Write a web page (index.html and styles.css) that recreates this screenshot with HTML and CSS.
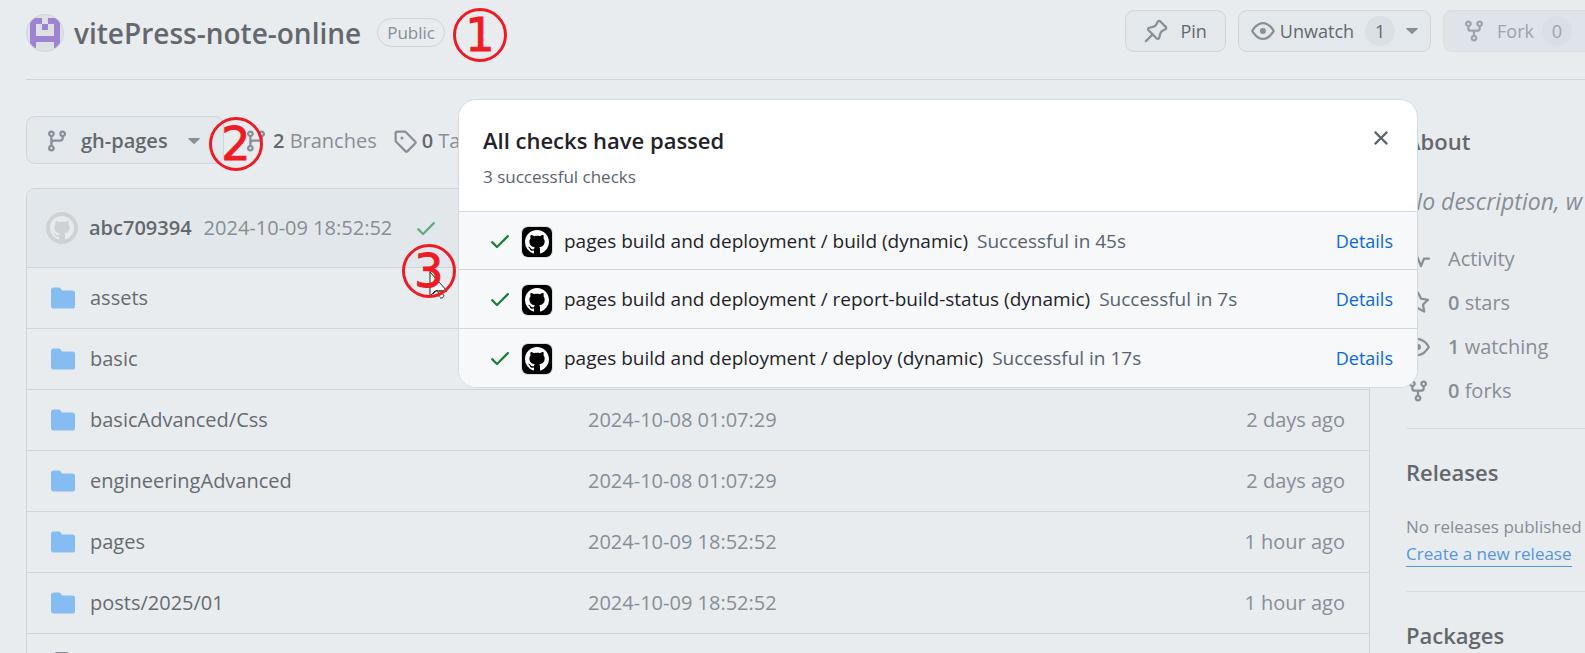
FILE: index.html
```html
<!DOCTYPE html>
<html lang="en">
<head>
<meta charset="utf-8">
<title>vitePress-note-online</title>
<meta name="viewport" content="width=device-width, initial-scale=1">
<link rel="stylesheet" href="styles.css">
</head>
<body>
<svg class="sprite" aria-hidden="true">
  <symbol id="branch" viewBox="0 0 16 16"><path d="M9.5 3.25a2.25 2.25 0 1 1 3 2.122V6A2.5 2.5 0 0 1 10 8.5H6a1 1 0 0 0-1 1v1.128a2.251 2.251 0 1 1-1.5 0V5.372a2.25 2.25 0 1 1 1.5 0v1.836A2.493 2.493 0 0 1 6 7h4a1 1 0 0 0 1-1v-.628A2.25 2.25 0 0 1 9.5 3.25Zm-6 0a.75.75 0 1 0 1.5 0 .75.75 0 0 0-1.5 0Zm8.25-.75a.75.75 0 1 0 0 1.5.75.75 0 0 0 0-1.5ZM4.25 12a.75.75 0 1 0 0 1.5.75.75 0 0 0 0-1.5Z"/></symbol>
  <symbol id="fork" viewBox="0 0 16 16"><path d="M5 5.372v.878c0 .414.336.75.75.75h4.5a.75.75 0 0 0 .75-.75v-.878a2.25 2.25 0 1 1 1.5 0v.878a2.25 2.25 0 0 1-2.25 2.25h-1.5v2.128a2.251 2.251 0 1 1-1.5 0V8.5h-1.5A2.25 2.25 0 0 1 3.5 6.25v-.878a2.25 2.25 0 1 1 1.5 0ZM5 3.25a.75.75 0 1 0-1.5 0 .75.75 0 0 0 1.5 0Zm6.75.75a.75.75 0 1 0 0-1.5.75.75 0 0 0 0 1.5Zm-3 8.75a.75.75 0 1 0-1.5 0 .75.75 0 0 0 1.5 0Z"/></symbol>
  <symbol id="eye" viewBox="0 0 16 16"><path d="M8 2c1.981 0 3.671.992 4.933 2.078 1.27 1.091 2.187 2.345 2.637 3.023a1.62 1.62 0 0 1 0 1.798c-.45.678-1.367 1.932-2.637 3.023C11.67 13.008 9.981 14 8 14c-1.981 0-3.671-.992-4.933-2.078C1.797 10.83.88 9.576.43 8.898a1.62 1.62 0 0 1 0-1.798c.45-.677 1.367-1.931 2.637-3.022C4.33 2.992 6.019 2 8 2ZM1.679 7.932a.12.12 0 0 0 0 .136c.411.622 1.241 1.75 2.366 2.717C5.176 11.758 6.527 12.5 8 12.5c1.473 0 2.825-.742 3.955-1.715 1.124-.967 1.954-2.096 2.366-2.717a.12.12 0 0 0 0-.136c-.412-.621-1.242-1.75-2.366-2.717C10.824 4.242 9.473 3.5 8 3.5c-1.473 0-2.825.742-3.955 1.715-1.124.967-1.954 2.096-2.366 2.717ZM8 10a2 2 0 1 1-.001-3.999A2 2 0 0 1 8 10Z"/></symbol>
  <symbol id="pin" viewBox="0 0 16 16"><path d="m11.294.984 3.722 3.722a1.75 1.75 0 0 1-.504 2.826l-1.327.613a3.089 3.089 0 0 0-1.707 2.084l-.584 2.454c-.317 1.332-1.972 1.8-2.94.832L5.75 11.311 1.78 15.28a.749.749 0 1 1-1.06-1.06l3.969-3.97-2.204-2.204c-.968-.968-.5-2.623.832-2.94l2.454-.584a3.08 3.08 0 0 0 2.084-1.707l.613-1.327a1.75 1.75 0 0 1 2.826-.504ZM6.283 9.723l2.732 2.731a.25.25 0 0 0 .42-.119l.584-2.454a4.586 4.586 0 0 1 2.537-3.098l1.328-.613a.25.25 0 0 0 .072-.404l-3.722-3.722a.25.25 0 0 0-.404.072l-.613 1.328a4.584 4.584 0 0 1-3.098 2.537l-2.454.584a.25.25 0 0 0-.119.42l2.731 2.732Z"/></symbol>
  <symbol id="tag" viewBox="0 0 16 16"><path d="M1 7.775V2.75C1 1.784 1.784 1 2.75 1h5.025c.464 0 .91.184 1.238.513l6.25 6.25a1.75 1.75 0 0 1 0 2.474l-5.026 5.026a1.75 1.75 0 0 1-2.474 0l-6.25-6.25A1.752 1.752 0 0 1 1 7.775Zm1.5 0c0 .066.026.13.073.177l6.25 6.25a.25.25 0 0 0 .354 0l5.025-5.025a.25.25 0 0 0 0-.354l-6.25-6.25a.25.25 0 0 0-.177-.073H2.75a.25.25 0 0 0-.25.25ZM6 5a1 1 0 1 1 0 2 1 1 0 0 1 0-2Z"/></symbol>
  <symbol id="check" viewBox="0 0 16 16"><path d="M13.78 4.22a.75.75 0 0 1 0 1.06l-7.25 7.25a.75.75 0 0 1-1.06 0L2.22 9.28a.751.751 0 0 1 1.06-1.06L6 10.94l6.72-6.72a.75.75 0 0 1 1.06 0Z"/></symbol>
  <symbol id="folder" viewBox="0 0 16 16"><path d="M1.75 1A1.75 1.75 0 0 0 0 2.75v10.5C0 14.216.784 15 1.75 15h12.5A1.75 1.75 0 0 0 16 13.25v-8.5A1.75 1.75 0 0 0 14.25 3H7.5a.25.25 0 0 1-.2-.1l-.9-1.2C6.07 1.26 5.55 1 5 1H1.75Z"/></symbol>
  <symbol id="file" viewBox="0 0 16 16"><path d="M2 1.75C2 .784 2.784 0 3.75 0h6.586c.464 0 .909.184 1.237.513l2.914 2.914c.329.328.513.773.513 1.237v9.586A1.75 1.75 0 0 1 13.25 16h-9.5A1.75 1.75 0 0 1 2 14.25Zm1.75-.25a.25.25 0 0 0-.25.25v12.5c0 .138.112.25.25.25h9.5a.25.25 0 0 0 .25-.25V6h-2.75A1.75 1.75 0 0 1 9 4.25V1.5Z"/></symbol>
  <symbol id="pulse" viewBox="0 0 16 16"><path d="M6 2c.306 0 .582.187.696.471L10 10.731l1.304-3.26A.751.751 0 0 1 12 7h3.25a.75.75 0 0 1 0 1.5h-2.742l-1.812 4.528a.751.751 0 0 1-1.392 0L6 4.77 4.696 8.03A.75.75 0 0 1 4 8.5H.75a.75.75 0 0 1 0-1.5h2.742l1.812-4.529A.751.751 0 0 1 6 2Z"/></symbol>
  <symbol id="star" viewBox="0 0 16 16"><path d="M8 .25a.75.75 0 0 1 .673.418l1.882 3.815 4.21.612a.75.75 0 0 1 .416 1.279l-3.046 2.97.719 4.192a.751.751 0 0 1-1.088.791L8 12.347l-3.766 1.98a.75.75 0 0 1-1.088-.79l.72-4.194L.818 6.374a.75.75 0 0 1 .416-1.28l4.21-.611L7.327.668A.75.75 0 0 1 8 .25Zm0 2.445L6.615 5.5a.75.75 0 0 1-.564.41l-3.097.45 2.24 2.184a.75.75 0 0 1 .216.664l-.528 3.084 2.769-1.456a.75.75 0 0 1 .698 0l2.77 1.456-.53-3.084a.75.75 0 0 1 .216-.664l2.24-2.183-3.096-.45a.75.75 0 0 1-.564-.41L8 2.694Z"/></symbol>
  <symbol id="close" viewBox="0 0 16 16"><path d="M3.72 3.72a.75.75 0 0 1 1.06 0L8 6.94l3.22-3.22a.751.751 0 0 1 1.06 1.06L9.06 8l3.22 3.22a.751.751 0 0 1-1.06 1.06L8 9.06l-3.22 3.22a.751.751 0 0 1-1.06-1.06L6.94 8 3.72 4.78a.75.75 0 0 1 0-1.06Z"/></symbol>
  <symbol id="mark" viewBox="0 0 16 16"><path d="M8 0c4.42 0 8 3.58 8 8a8.013 8.013 0 0 1-5.45 7.59c-.4.08-.55-.17-.55-.38 0-.27.01-1.13.01-2.2 0-.75-.25-1.23-.54-1.48 1.78-.2 3.65-.88 3.65-3.95 0-.88-.31-1.59-.82-2.15.08-.2.36-1.02-.08-2.12 0 0-.67-.22-2.2.82-.64-.18-1.32-.27-2-.27-.68 0-1.36.09-2 .27-1.53-1.03-2.2-.82-2.2-.82-.44 1.1-.16 1.92-.08 2.12-.51.56-.82 1.28-.82 2.15 0 3.06 1.86 3.75 3.64 3.95-.23.2-.44.55-.51 1.07-.46.21-1.61.55-2.33-.66-.15-.24-.6-.83-1.23-.82-.67.01-.27.38.01.53.34.19.73.9.82 1.13.16.45.68 1.31 2.69.94 0 .67.01 1.3.01 1.49 0 .21-.15.45-.55.38A7.995 7.995 0 0 1 0 8c0-4.42 3.58-8 8-8Z"/></symbol>
  <symbol id="caret" viewBox="0 0 12 6"><path d="M.9 0h10.2c.7 0 .9.6.5 1L6.5 5.7a.7.7 0 0 1-1 0L.4 1C0 .6.2 0 .9 0Z"/></symbol>
</svg>

<header class="repo-head">
  <svg class="identicon" viewBox="0 0 38 38" aria-hidden="true">
    <defs><clipPath id="round"><circle cx="19" cy="19" r="18"/></clipPath></defs>
    <circle cx="19" cy="19" r="18.5" fill="#dde1e4" stroke="#d0d5d9"/>
    <path clip-path="url(#round)" fill="#9c84d3" d="M4 4h12v6h-6v12h18V10h-6V4h12v30h-6v-6H10v6H4ZM16 10h6v6h-6Z"/>
  </svg>
  <h1 class="repo-name">vitePress-note-online</h1>
  <span class="visibility">Public</span>
  <div class="actions">
    <button class="btn btn-pin" type="button"><svg class="icon"><use href="#pin"/></svg>Pin</button>
    <button class="btn btn-watch" type="button"><svg class="icon"><use href="#eye"/></svg>Unwatch<span class="count">1</span><svg class="caret"><use href="#caret"/></svg></button>
    <button class="btn btn-fork" type="button" disabled><svg class="icon"><use href="#fork"/></svg>Fork<span class="count">0</span></button>
  </div>
</header>

<div class="layout">
  <main class="code">
    <div class="toolbar">
      <button class="btn btn-branch" type="button"><svg class="icon"><use href="#branch"/></svg>gh-pages<svg class="caret"><use href="#caret"/></svg></button>
      <a class="stat" href="#branches"><svg class="icon"><use href="#branch"/></svg><span><b>2</b> Branches</span></a>
      <a class="stat" href="#tags"><svg class="icon"><use href="#tag"/></svg><span><b>0</b> Tags</span></a>
    </div>
    <div class="files">
      <div class="commit">
        <span class="avatar"><svg><use href="#mark"/></svg></span>
        <b class="author">abc709394</b>
        <time>2024-10-09 18:52:52</time>
        <svg class="icon passed"><use href="#check"/></svg>
      </div>
      <table class="file-table">
        <tbody>
          <tr><td class="name"><span class="entry"><svg class="icon folder"><use href="#folder"/></svg>assets</span></td><td></td><td></td></tr>
          <tr><td class="name"><span class="entry"><svg class="icon folder"><use href="#folder"/></svg>basic</span></td><td></td><td></td></tr>
          <tr><td class="name"><span class="entry"><svg class="icon folder"><use href="#folder"/></svg>basicAdvanced/Css</span></td><td>2024-10-08 01:07:29</td><td class="age">2 days ago</td></tr>
          <tr><td class="name"><span class="entry"><svg class="icon folder"><use href="#folder"/></svg>engineeringAdvanced</span></td><td>2024-10-08 01:07:29</td><td class="age">2 days ago</td></tr>
          <tr><td class="name"><span class="entry"><svg class="icon folder"><use href="#folder"/></svg>pages</span></td><td>2024-10-09 18:52:52</td><td class="age">1 hour ago</td></tr>
          <tr><td class="name"><span class="entry"><svg class="icon folder"><use href="#folder"/></svg>posts/2025/01</span></td><td>2024-10-09 18:52:52</td><td class="age">1 hour ago</td></tr>
          <tr><td class="name"><span class="entry"><svg class="icon"><use href="#file"/></svg></span></td><td></td><td></td></tr>
        </tbody>
      </table>
    </div>
  </main>

  <aside class="sidebar">
    <section class="panel">
      <h2>About</h2>
      <p class="description">No description, w</p>
      <ul class="facts">
        <li><svg class="icon"><use href="#pulse"/></svg><span>Activity</span></li>
        <li><svg class="icon"><use href="#star"/></svg><span><b>0</b> stars</span></li>
        <li><svg class="icon"><use href="#eye"/></svg><span><b>1</b> watching</span></li>
        <li><svg class="icon"><use href="#fork"/></svg><span><b>0</b> forks</span></li>
      </ul>
    </section>
    <section class="panel">
      <h2>Releases</h2>
      <p class="small">No releases published</p>
      <a class="new-release" href="#new">Create a new release</a>
    </section>
    <section class="panel">
      <h2>Packages</h2>
    </section>
  </aside>
</div>

<section class="checks" role="dialog" aria-labelledby="checks-title">
  <div class="checks-head">
    <div>
      <h2 id="checks-title">All checks have passed</h2>
      <p>3 successful checks</p>
    </div>
    <button class="close" type="button" aria-label="Close"><svg class="icon"><use href="#close"/></svg></button>
  </div>
  <ul class="check-list">
    <li><svg class="icon ok"><use href="#check"/></svg><span class="app"><svg><use href="#mark"/></svg></span><b>pages build and deployment / build (dynamic)</b><span class="result">Successful in 45s</span><a href="#build">Details</a></li>
    <li><svg class="icon ok"><use href="#check"/></svg><span class="app"><svg><use href="#mark"/></svg></span><b>pages build and deployment / report-build-status (dynamic)</b><span class="result">Successful in 7s</span><a href="#report">Details</a></li>
    <li><svg class="icon ok"><use href="#check"/></svg><span class="app"><svg><use href="#mark"/></svg></span><b>pages build and deployment / deploy (dynamic)</b><span class="result">Successful in 17s</span><a href="#deploy">Details</a></li>
  </ul>
</section>

<svg class="cursor" viewBox="0 0 20 28" aria-hidden="true">
  <path d="M1 1v24l5-5h12Z" fill="#fff" stroke="#222" stroke-width="1"/>
  <path d="M4 23l4-4 2 4v3M10 20h5l-3 3c3-1 4 3 1 4h-2" fill="none" stroke="#333" stroke-width="1"/>
</svg>
<span class="step step-1">1</span>
<span class="step step-2">2</span>
<span class="step step-3">3</span>
</body>
</html>
```

FILE: styles.css
```css
* { box-sizing: border-box; }

body {
  position: relative;
  height: 100vh;
  margin: 0;
  overflow: hidden;
  background: #e8ecef;
  color: #878e97;
  font: 20px/30px "Open Sans", "Noto Sans", sans-serif;
}

h1, h2, p, ul { margin: 0; padding: 0; }
h1, h2 { font-weight: 600; }
ul { list-style: none; }
a { color: inherit; text-decoration: none; }
b { font-weight: 600; }
button { font: inherit; }
.sprite { position: absolute; width: 0; height: 0; }
.icon { flex: none; width: 24px; height: 24px; fill: #878f98; }
.caret { flex: none; width: 12px; height: 6px; fill: #878f98; }

.repo-head {
  display: flex;
  align-items: center;
  height: 80px;
  margin-left: 26px;
  padding-bottom: 14px;
  border-bottom: 1px solid #ced5da;
  white-space: nowrap;
}
.identicon { flex: none; width: 38px; height: 38px; margin-right: 10px; }
.repo-name { color: #64686d; font-size: 28px; line-height: 40px; }
.visibility {
  margin-left: 16px;
  padding: 0 9px;
  border: 1px solid #ced5da;
  border-radius: 15px;
  font-size: 17px;
  font-weight: 500;
  line-height: 27px;
}
.actions { display: flex; gap: 12px; margin-left: auto; padding-bottom: 4px; }

.btn {
  display: flex;
  align-items: center;
  height: 42px;
  padding: 0 18px;
  border: 1px solid #ced5da;
  border-radius: 9px;
  background: #e3e8ec;
  color: #64686d;
  font-size: 18px;
  font-weight: 500;
}
.btn-pin { gap: 12px; }
.btn-watch { padding: 0 12px; gap: 5px; }
.btn-watch .count { margin: 0 6px; }
.btn-fork {
  gap: 8px;
  padding: 0 13px 0 18px;
  border-color: #d8dee4;
  border-right: 0;
  border-radius: 9px 0 0 9px;
  background: #dfe3ea;
  color: #9ca4ad;
}
.btn-fork .icon { margin-right: 3px; fill: #9ca4ad; }
.count {
  width: 30px;
  border-radius: 15px;
  background: #dadfe5;
  line-height: 30px;
  text-align: center;
}

.layout {
  display: grid;
  grid-template-columns: minmax(0, 1fr) 179px;
  gap: 36px;
  padding: 36px 0 0 26px;
}
.toolbar { display: flex; align-items: center; gap: 16px; white-space: nowrap; }
.btn-branch { width: 198px; height: 48px; gap: 12px; padding-top: 2px; font-size: 20px; font-weight: 600; }
.btn-branch .caret { margin-left: 8px; }
.stat { display: flex; align-items: center; gap: 5px; padding-top: 2px; }
.stat:nth-of-type(1) { margin-left: 4px; }
.stat b { color: #64686d; }

.files { margin-top: 24px; border: 1px solid #ced5da; border-radius: 9px 9px 0 0; }
.commit {
  display: flex;
  align-items: center;
  height: 79px;
  padding: 0 24px 0 19px;
  border-bottom: 1px solid #ced5da;
  border-radius: 8px 8px 0 0;
  background: #e2e7eb;
}
.avatar {
  display: grid;
  place-items: center;
  width: 32px;
  height: 32px;
  margin-right: 11px;
  border-radius: 50%;
  background: #ced2d5;
}
.avatar svg { width: 24px; height: 24px; fill: #e8ebed; }
.author { margin-right: 12px; color: #64686d; }
.passed { margin-left: 22px; fill: #62ab7f; }

.file-table { width: 100%; border-spacing: 0; table-layout: fixed; }
.file-table td { height: 61px; padding: 0; border-bottom: 1px solid #ced5da; }
.file-table .name { width: 561px; padding-left: 24px; color: #676b70; }
.file-table .age { padding-right: 24px; text-align: right; }
.entry { display: flex; align-items: center; gap: 15px; }
.folder { fill: #85bcf1; }

.sidebar { white-space: nowrap; }
.panel { padding-bottom: 24px; border-bottom: 1px solid #d6dce1; }
.panel + .panel { padding-top: 28px; }
.panel h2 { color: #64686d; font-size: 22px; line-height: 30px; }
.panel:first-child { padding: 10px 0 22px; }
.description { margin: 27px 0 25px; font-size: 23px; line-height: 36px; font-style: italic; }
.facts { display: grid; gap: 14px; }
.facts li { display: flex; align-items: center; gap: 18px; }
.small { margin-top: 26px; font-size: 17px; line-height: 27px; }
.new-release {
  display: block;
  width: fit-content;
  margin-top: 2px;
  border-bottom: 1px solid #5596dd;
  color: #5596dd;
  font-size: 17px;
  line-height: 24px;
}

.checks {
  position: absolute;
  top: 99px;
  left: 458px;
  right: 167px;
  overflow: hidden;
  border: 1px solid #d3dae0;
  border-radius: 18px;
  background: #fff;
  color: #59636e;
}
.checks-head {
  display: flex;
  justify-content: space-between;
  align-items: flex-start;
  padding: 22px 24px 21px;
}
.checks-head h2 { color: #1f2328; font-size: 22px; line-height: 36px; }
.checks-head p { margin-top: 5px; font-size: 17px; line-height: 27px; }
.close { display: flex; padding: 4px 0; border: 0; background: none; }
.close .icon { fill: #59636e; }
.check-list { background: #f6f8fa; font-size: 19px; }
.check-list li {
  display: flex;
  align-items: center;
  height: 59px;
  padding: 0 24px 0 29px;
  border-top: 1px solid #d1d9e0;
  white-space: nowrap;
}
.check-list li:first-child { height: 58px; }
.check-list b { margin-right: 9px; color: #1f2328; font-weight: 500; }
.check-list a { margin-left: auto; color: #0969da; font-size: 18px; }
.ok { fill: #1a7f37; }
.app {
  display: grid;
  place-items: center;
  width: 30px;
  height: 30px;
  margin: 2px 12px 0 10px;
  border-radius: 6px;
  background: #000;
  box-shadow: 0 0 0 1px #d9dcdf;
}
.app svg { width: 24px; height: 24px; fill: #fff; }

.step {
  position: absolute;
  width: 54px;
  height: 54px;
  border: 3px solid #ed1c24;
  border-radius: 50%;
  color: #ed1c24;
  font: 46px/48px "DejaVu Sans", sans-serif;
  text-align: center;
  -webkit-text-stroke: 1px #ed1c24;
}
.step-1 { left: 453px; top: 8px; }
.step-2 { left: 209px; top: 117px; }
.step-3 { left: 402px; top: 244px; }
.cursor { position: absolute; left: 429px; top: 271px; width: 20px; height: 28px; }
```
